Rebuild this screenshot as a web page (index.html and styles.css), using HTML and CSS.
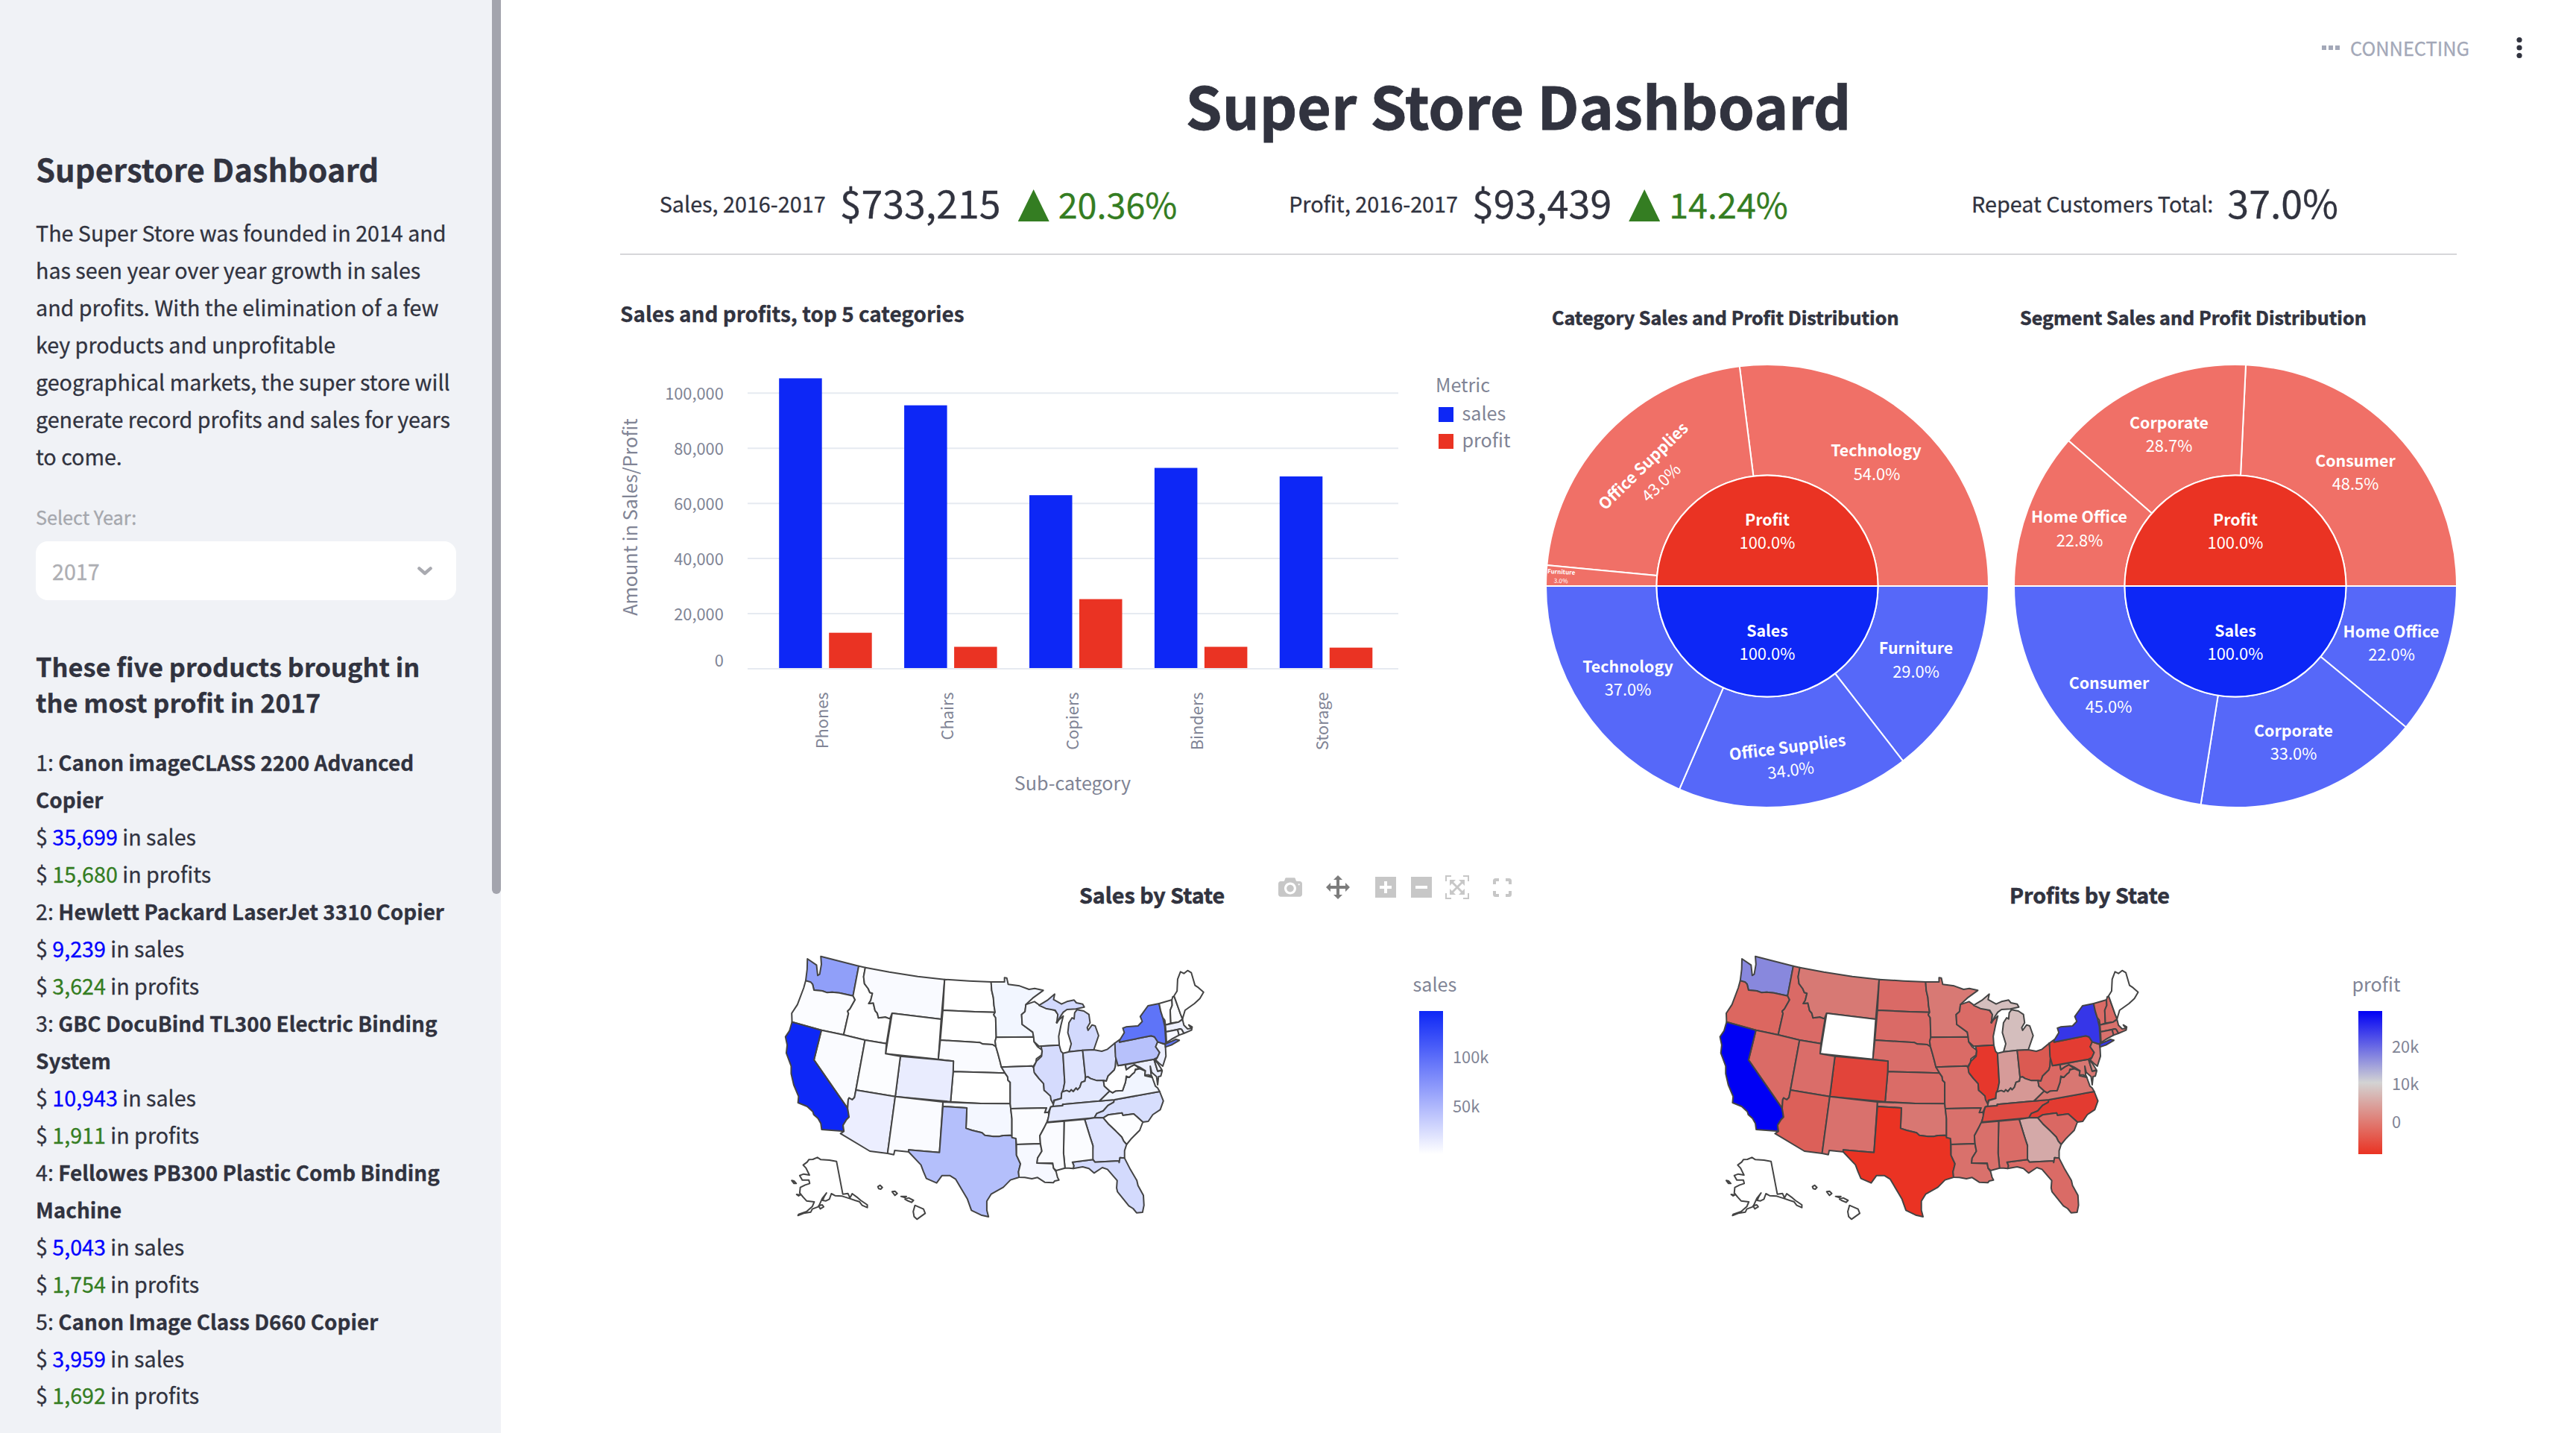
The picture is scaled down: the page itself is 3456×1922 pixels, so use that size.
FILE: index.html
```
<!DOCTYPE html>
<html lang="en">
<head>
<meta charset="utf-8">
<title>Super Store Dashboard</title>
<link rel="stylesheet" href="styles.css">
</head>
<body>
<div class="app">
  <aside class="sidebar">
    <h2 class="sidebar-title">Superstore Dashboard</h2>
    <p class="intro">The Super Store was founded in 2014 and has seen year over year growth in sales and profits. With the elimination of a few key products and unprofitable geographical markets, the super store will generate record profits and sales for years to come.</p>
    <div class="select-label">Select Year:</div>
    <div class="select">
      <span>2017</span>
      <svg class="chevron" viewBox="0 0 20 12"><path d="M2.4 2.4 L10 9 L17.6 2.4"/></svg>
    </div>
    <h3 class="list-title">These five products brought in the most profit in 2017</h3>
    <div class="products">
      <div>1: <b>Canon imageCLASS 2200 Advanced Copier</b></div>
      <div>$ <span class="blue">35,699</span> in sales</div>
      <div>$ <span class="green">15,680</span> in profits</div>
      <div>2: <b>Hewlett Packard LaserJet 3310 Copier</b></div>
      <div>$ <span class="blue">9,239</span> in sales</div>
      <div>$ <span class="green">3,624</span> in profits</div>
      <div>3: <b>GBC DocuBind TL300 Electric Binding System</b></div>
      <div>$ <span class="blue">10,943</span> in sales</div>
      <div>$ <span class="green">1,911</span> in profits</div>
      <div>4: <b>Fellowes PB300 Plastic Comb Binding Machine</b></div>
      <div>$ <span class="blue">5,043</span> in sales</div>
      <div>$ <span class="green">1,754</span> in profits</div>
      <div>5: <b>Canon Image Class D660 Copier</b></div>
      <div>$ <span class="blue">3,959</span> in sales</div>
      <div>$ <span class="green">1,692</span> in profits</div>
    </div>
    <div class="scroll-thumb"></div>
  </aside>

  <main class="main">
    <header class="topbar">
      <svg class="status-dots" viewBox="0 0 24 8"><path d="M0 1h6v6H0zM9 1h6v6H9zM18 1h6v6h-6z"/></svg>
      <span class="status-text">CONNECTING</span>
      <svg class="menu" viewBox="0 0 8 30"><circle cx="4" cy="4.5" r="3.6"/><circle cx="4" cy="15" r="3.6"/><circle cx="4" cy="25.5" r="3.6"/></svg>
    </header>
    <h1 class="title">Super Store Dashboard</h1>
    <section class="kpis">
      <div class="kpi">
        <span class="kpi-label">Sales, 2016-2017</span><span class="kpi-value">$733,215</span><i class="kpi-up"></i><span class="kpi-delta">20.36%</span>
      </div>
      <div class="kpi">
        <span class="kpi-label">Profit, 2016-2017</span><span class="kpi-value">$93,439</span><i class="kpi-up"></i><span class="kpi-delta">14.24%</span>
      </div>
      <div class="kpi kpi-last">
        <span class="kpi-label">Repeat Customers Total:</span><span class="kpi-value">37.0%</span>
      </div>
    </section>
    <section class="charts">
      <div class="panel">
        <h4 class="bar-title">Sales and profits, top 5 categories</h4>
        <svg class="bar-chart" id="bars" viewBox="0 0 1208 660"></svg>
      </div>
      <div class="panel">
        <h4 class="pie-title">Category Sales and Profit Distribution</h4>
        <svg class="pie" id="category" viewBox="-297 -341 594 655"></svg>
      </div>
      <div class="panel">
        <h4 class="pie-title">Segment Sales and Profit Distribution</h4>
        <svg class="pie" id="segment" viewBox="-297 -341 594 655"></svg>
      </div>
    </section>
    <section class="maps">
      <div class="panel">
        <div class="map-head map-head-sales">
          <h4>Sales by State</h4>
          <div class="modebar">
            <svg class="ic camera" viewBox="0 0 1000 1000"><path transform="matrix(1 0 0 -1 0 850)" d="m500 450c-83 0-150-67-150-150 0-83 67-150 150-150 83 0 150 67 150 150 0 83-67 150-150 150z m400 150h-120c-16 0-34 13-39 29l-31 93c-6 15-23 28-40 28h-340c-16 0-34-13-39-28l-31-94c-6-15-23-28-40-28h-120c-55 0-100-45-100-100v-450c0-55 45-100 100-100h800c55 0 100 45 100 100v450c0 55-45 100-100 100z m-400-550c-138 0-250 112-250 250 0 138 112 250 250 250 138 0 250-112 250-250 0-138-112-250-250-250z m365 380c-19 0-35 16-35 35 0 19 16 35 35 35 19 0 35-16 35-35 0-19-16-35-35-35z"/></svg>
            <svg class="ic pan" viewBox="0 0 1000 1000"><path transform="matrix(1 0 0 -1 0 850)" d="m1000 350l-187 188 0-125-250 0 0 250 125 0-188 187-187-187 125 0 0-250-250 0 0 125-188-188 186-187 0 125 252 0 0-250-125 0 187-188 188 188-125 0 0 250 250 0 0-126 187 188z"/></svg>
            <svg class="ic narrow plus" viewBox="0 0 875 1000"><path transform="matrix(1 0 0 -1 0 850)" d="m1 787l0-875 875 0 0 875-875 0z m687-500l-187 0 0-187-125 0 0 187-188 0 0 125 188 0 0 187 125 0 0-187 187 0 0-125z"/></svg>
            <svg class="ic narrow minus" viewBox="0 0 875 1000"><path transform="matrix(1 0 0 -1 0 850)" d="m0 788l0-876 875 0 0 876-875 0z m688-500l-500 0 0 125 500 0 0-125z"/></svg>
            <svg class="ic auto" viewBox="0 0 1000 1000"><path transform="matrix(1 0 0 -1 0 850)" d="m250 850l-187 0-63 0 0-62 0-188 63 0 0 188 187 0 0 62z m688 0l-188 0 0-62 188 0 0-188 62 0 0 188 0 62-62 0z m-875-938l0 188-63 0 0-188 0-62 63 0 187 0 0 62-187 0z m875 188l0-188-188 0 0-62 188 0 62 0 0 62 0 188-62 0z m-125 188l-1 0-93-94-156 156 156 156 92-93 2 0 0 250-250 0 0-2 93-92-156-156-156 156 94 92 0 2-250 0 0-250 0 0 93 93 157-156-157-156-93 94 0 0 0-250 250 0 0 0-94 93 156 157 156-157-93-93 0 0 250 0 0 250z"/></svg>
            <svg class="full" viewBox="0 0 25 25"><path d="M2 8V3.500Q2 2 3.500 2H8M17 2h4.500Q23 2 23 3.500V8M23 17v4.500Q23 23 21.500 23H17M8 23H3.500Q2 23 2 21.500V17"/></svg>
          </div>
        </div>
        <svg class="map" id="sales-map" viewBox="832 1240 1216 430"></svg>
      </div>
      <div class="panel">
        <div class="map-head map-head-profit"><h4>Profits by State</h4></div>
        <svg class="map" id="profit-map" viewBox="2080 1240 1216 430"></svg>
      </div>
    </section>
  </main>
</div>
<script src="charts.js"></script>
</body>
</html>
```
FILE: styles.css
```
* { box-sizing: border-box; }
html, body { margin: 0; height: 100%; }
body {
  background: #fff;
  color: #31333f;
  font-family: "Noto Sans CJK JP", "Noto Sans", sans-serif;
  font-size: 28.67px;
  -webkit-text-stroke: 0.3px currentColor;
  overflow: hidden;
}
h1, h2, h3, h4, p { margin: 0; }
svg { display: block; overflow: visible; }

.app { display: flex; width: 3456px; height: 1922px; }

/* sidebar */
.sidebar {
  position: relative;
  width: 672px;
  flex: none;
  padding: 201px 60px 0 48px;
  background: #f0f2f6;
  line-height: 50px;
}
.sidebar-title { font-size: 41.85px; line-height: 50px; font-weight: 700; }
.intro { margin-top: 36px; }
.select-label { margin-top: 38px; font-size: 25.2px; line-height: 36px; color: #a5a7ad; }
.select {
  display: flex;
  justify-content: space-between;
  align-items: center;
  height: 79px;
  margin-top: 15px;
  padding: 0 32px 0 22px;
  border-radius: 16px;
  background: #fff;
  color: #adaeb3;
}
.chevron { width: 20px; height: 12px; fill: none; stroke: #a9aab0; stroke-width: 4.4; stroke-linecap: round; stroke-linejoin: round; }
.list-title { margin-top: 64px; font-size: 34.4px; line-height: 48px; font-weight: 700; }
.products { margin-top: 32px; line-height: 49.97px; }
.products b { font-weight: 700; font-size: 27.88px; line-height: 30px; }
.blue { color: #0000ff; }
.green { color: #347d22; }
.scroll-thumb {
  position: absolute;
  top: 0;
  right: 0;
  width: 12px;
  height: 1199px;
  border-radius: 0 0 6px 6px;
  background: #a3a4ad;
}

/* header */
.main { flex: 1; padding: 0 160px; }
.topbar {
  display: flex;
  align-items: center;
  justify-content: flex-end;
  height: 92px;
  margin-right: -88px;
  padding-top: 35px;
}
.status-dots { width: 24px; height: 8px; fill: #a3a8b8; }
.status-text { margin: 0 63px 0 14px; font-size: 25.38px; line-height: 40px; color: #a3a8b8; }
.menu { width: 8px; height: 30px; fill: #31333f; }
.title {
  padding-right: 54px;
  text-align: center;
  font-size: 78.63px;
  line-height: 96px;
  font-weight: 700;
  -webkit-text-stroke-width: 0.8px;
}
.kpis {
  display: grid;
  grid-template-columns: repeat(3, 1fr);
  gap: 32px;
  height: 154px;
  padding-top: 51px;
  border-bottom: 2px solid #d6d6d9;
}
.kpi { display: flex; justify-content: center; white-space: nowrap; }
.kpi-last { padding-right: 10px; }
.kpi-label { margin-top: 14px; line-height: 40px; font-size: 28.75px; }
.kpi-value { margin-left: 19px; line-height: 64px; font-size: 51.9px; }
.kpi-up {
  width: 42px;
  height: 43px;
  margin: 15px 12px 0 23px;
  background: #347d22;
  clip-path: polygon(50% 0, 100% 100%, 0 100%);
}
.kpi-delta { margin-top: 2px; line-height: 64px; font-size: 46.7px; color: #347d22; }

/* charts */
.charts { display: grid; grid-template-columns: 1208px 594px 594px; gap: 34px; height: 798px; }
.bar-title { margin-top: 58px; font-size: 27.9px; line-height: 40px; font-weight: 700; }
.bar-chart { width: 1208px; height: 660px; }
.pie-title { margin-top: 63px; padding-left: 8px; font-size: 25.1px; line-height: 40px; font-weight: 700; -webkit-text-stroke-width: 0.6px; }
.pie { width: 594px; height: 655px; }
svg text { font-family: "Noto Sans CJK JP", "Noto Sans", sans-serif; }
.grid { stroke: #e6eaf1; stroke-width: 2; }
.tick { fill: #808495; color: #808495; font-size: 21.8px; }
.axis { fill: #808495; color: #808495; font-size: 25.15px; }
.end { text-anchor: end; }
.mid { text-anchor: middle; }
.sales { fill: #0d27f6; }
.profit { fill: #ea3323; }
.slice { stroke: #fff; stroke-width: 2; }
.sales-light { fill: #5668f9; }
.profit-light { fill: #f07067; }
.pie-name { fill: #fff; color: #fff; font-size: 21.4px; font-weight: 700; text-anchor: middle; -webkit-text-stroke-width: 0.7px; }
.pie-value { fill: #fff; color: #fff; font-size: 21.92px; text-anchor: middle; }

/* maps */
.maps { display: grid; grid-template-columns: 1216px 1216px; gap: 32px; }
.map-head { display: flex; height: 100px; padding-top: 40px; }
.map-head h4 { font-size: 28.65px; line-height: 40px; font-weight: 700; -webkit-text-stroke-width: 0.6px; }
.map-head-sales { padding-left: 616px; }
.map-head-profit { padding-left: 616px; }
.modebar { display: flex; margin: -6px 0 0 72px; fill: #c7c7c7; }
.ic { width: 32px; height: 32px; }
.narrow { width: 28px; }
.pan { margin-left: 32px; fill: #7c7c7c; }
.plus { margin-left: 34px; }
.minus { margin-left: 20px; }
.auto { margin-left: 18px; }
.full { width: 25px; height: 25px; margin: 4px 0 0 32px; fill: none; stroke: #c7c7c7; stroke-width: 4; }
.map { width: 1216px; height: 430px; }
.state { stroke: #444; stroke-width: 2; stroke-linejoin: round; vector-effect: non-scaling-stroke; }
```
FILE: charts.js
```
const NS = 'http://www.w3.org/2000/svg';
function el(parent, tag, attrs, text) {
  const node = document.createElementNS(NS, tag);
  for (const key in attrs) node.setAttribute(key, attrs[key]);
  if (text !== undefined) node.textContent = text;
  parent.appendChild(node);
  return node;
}

// Grouped bar chart
const bars = document.getElementById('bars');
const base = 457;
const perUnit = 73.95 / 20000;
for (let v = 0; v <= 100000; v += 20000) {
  const y = base - v * perUnit;
  el(bars, 'line', { class: 'grid', x1: 171, x2: 1044, y1: y, y2: y });
  el(bars, 'text', { class: 'tick end', x: 138.800, y: v ? y + 9 : y - 3.500 }, v.toLocaleString('en-US'));
}
[['Phones', 105100, 12800], ['Chairs', 95300, 7700], ['Copiers', 62700, 25000], ['Binders', 72600, 7700], ['Storage', 69500, 7400]]
  .forEach(([name, sales, profit], i) => {
    const x = 213.2 + i * 167.9;
    el(bars, 'rect', { class: 'sales', x: x, y: base - 1 - sales * perUnit, width: 57.500, height: sales * perUnit });
    el(bars, 'rect', { class: 'profit', x: x + 67, y: base - 1 - profit * perUnit, width: 57.500, height: profit * perUnit });
    el(bars, 'text', { class: 'tick end', transform: `translate(${x + 65.5} 488.5) rotate(-90)` }, name);
  });
el(bars, 'text', { class: 'axis mid', transform: 'translate(23 253.5) rotate(-90)' }, 'Amount in Sales/Profit');
el(bars, 'text', { class: 'axis mid', x: 607, y: 620 }, 'Sub-category');
el(bars, 'text', { class: 'axis', x: 1094, y: 86 }, 'Metric');
el(bars, 'rect', { class: 'sales', x: 1098, y: 106, width: 20, height: 20 });
el(bars, 'rect', { class: 'profit', x: 1098, y: 142, width: 20, height: 20 });
el(bars, 'text', { class: 'axis', x: 1129.500, y: 123.500 }, 'sales');
el(bars, 'text', { class: 'axis', x: 1129.500, y: 159.500 }, 'profit');

// Sunburst charts: inner half discs plus an outer ring, angles run from 3 o'clock
function ring(svg, r0, r1, a0, a1, cls) {
  const p = (r, a) => `${r * Math.cos(a * Math.PI / 180)} ${-r * Math.sin(a * Math.PI / 180)}`;
  const sweep = a1 > a0 ? 0 : 1;
  el(svg, 'path', { class: 'slice ' + cls, d: `M${p(r0, a0)}L${p(r1, a0)}A${r1} ${r1} 0 0 ${sweep} ${p(r1, a1)}L${p(r0, a1)}A${r0 || 1} ${r0 || 1} 0 0 ${1 - sweep} ${p(r0, a0)}Z` });
}
function sunburst(id, profits, sales, labels) {
  const svg = document.getElementById(id);
  const draw = (cuts, sign, cls) => {
    let a = 0;
    cuts.forEach(c => { const b = a + c * 1.8; ring(svg, 148.500, 297, sign * a, sign * b, cls); a = b; });
  };
  draw(profits, 1, 'profit-light');
  draw(sales, -1, 'sales-light');
  ring(svg, 0, 148.500, 0, 180, 'profit');
  ring(svg, 0, 148.500, 0, -180, 'sales');
  labels.concat([['Profit', 0, -81.500, '100.0%', 0, -50], ['Sales', 0, 67.500, '100.0%', 0, 99]])
    .forEach(([name, x, y, value, vx, vy, rot = 0, scale = 1]) => {
      el(svg, 'text', { class: 'pie-name', transform: `translate(${x} ${y}) rotate(${rot}) scale(${scale})` }, name);
      el(svg, 'text', { class: 'pie-value', transform: `translate(${vx} ${vy}) rotate(${rot}) scale(${scale})` }, value);
    });
}
sunburst('category', [54, 43, 3], [29, 34, 37], [
  ['Technology', 146, -174.500, '54.0%', 147, -142],
  ['Office Supplies', -161, -155.500, '43.0%', -137, -133, -44.1],
  ['Furniture', -276.500, -16, '3.0%', -277, -4, 2.7, 0.375],
  ['Technology', -187, 115.500, '37.0%', -187, 147],
  ['Office Supplies', 28, 224, '34.0%', 32.500, 255, -7.2],
  ['Furniture', 199.500, 90.500, '29.0%', 199.500, 123]
]);
sunburst('segment', [48.500, 28.700, 22.800], [22, 33, 45], [
  ['Consumer', 161, -160.500, '48.5%', 161, -129],
  ['Corporate', -89, -211.500, '28.7%', -89, -180],
  ['Home Office', -209.500, -85.500, '22.8%', -209, -53.500],
  ['Home Office', 209, 69, '22.0%', 209.500, 100],
  ['Corporate', 78, 202, '33.0%', 78, 233],
  ['Consumer', -169.500, 138, '45.0%', -170, 169.500]
]);

// State outlines with their colours on the sales and the profit scale
const STATES = [
  ['AK', '#fff', '#fff', 'M98 908L112 896 118 886 132 885 148 877 160 886 190 888 215 893 237 1025 255 1022 262 1040 270 1023 290 1040 300 1050 323 1068 323 1079 305 1070 295 1055 280 1050 262 1043 235 1033 210 1031 197 1023 190 1045 178 1052 166 1050 172 1035 180 1020 165 1042 158 1060 152 1075 130 1085 125 1097 100 1102 80 1111 82 1106 110 1095 130 1075 137 1056 110 1052 98 1037 86 1020 88 998 105 988 121 982 118 968 95 968 86 950 100 944 120 948 108 920ZM58 970L66 972 74 982 66 982ZM75 1026L88 1028 82 1032ZM152 1072L165 1068 170 1076 158 1084Z'],
  ['HI', '#fff', '#fff', 'M360 995L368 989 376 998 370 1005 363 1003ZM410 1015L420 1013 428 1022 420 1030ZM441 1034L460 1034 455 1039ZM455 1045L468 1040 485 1050 478 1058 462 1050ZM490 1070L520 1085 526 1102 497 1126 487 1115 484 1095Z'],
  ['WA', '#909ff9', '#8888dd', 'M113 78L145 103 149 145 156 140 162 100 160 68 293 107 273 227 225 215 200 212 182 214 165 207 136 204 131 180 107 166 112 120Z'],
  ['OR', '#fbfcff', '#dc6760', 'M107 166L125 172 131 180 136 204 165 207 182 214 200 212 225 215 273 227 280 243 262 280 254 289 257 298 240 384 162 365 59 332 58 297 78 262 100 195Z'],
  ['ID', '#fefeff', '#da6a66', 'M293 107L316 113 310 150 313 178 326 198 332 214 341 217 335 245 328 258 344 256 350 286 358 297 362 316 386 312 402 319 406 308 390 419 315 405 240 384 257 298 254 289 262 280 280 243 273 227Z'],
  ['MT', '#f9faff', '#d77974', 'M316 113L400 131 500 149 594 161 582 321 410 297 406 308 402 319 386 312 362 316 358 297 350 286 344 256 328 258 335 245 341 217 332 214 326 198 313 178 310 150Z'],
  ['WY', '#fff', '#fff', 'M410 297L582 321 572 482 387 460Z'],
  ['ND', '#fff', '#da6a66', 'M594 161L680 167 757 171 759 205 765 235 767 265 771 293 700 291 588 285Z'],
  ['SD', '#fff', '#da6a66', 'M588 285L700 291 771 293 766 303 773 315 775 394 771 410 774 432 762 423 728 421 718 415 579 405Z'],
  ['NE', '#fafbff', '#d96d69', 'M579 405L718 415 728 421 762 423 774 432 781 460 788 490 793 512 806 538 720 535 624 532 625 490 572 482Z'],
  ['KS', '#fff', '#da6c67', 'M624 532L720 535 806 538 815 553 816 566 824 575 824 661 720 660 615 653Z'],
  ['CO', '#e9ecfe', '#e2443a', 'M439 470L572 484 625 490 624 532 615 653 421 632Z'],
  ['NV', '#fafbff', '#da6b66', 'M162 365L240 384 315 405 278 636 270 645 259 638 256 645 254 680 136 485Z'],
  ['UT', '#fcfdff', '#da6d69', 'M315 405L390 419 387 460 439 470 421 632 283 606Z'],
  ['CA', '#0d27f6', '#0000f5', 'M59 332L162 365 136 485 254 680 259 715 250 725 238 748 241 772 163 765 160 740 150 720 135 705 132 693 112 672 80 657 82 632 65 585 56 540 56 510 39 457 42 425 36 392 50 368Z'],
  ['AZ', '#eceeff', '#dc6059', 'M283 606L421 632 394 861 332 852 229 781 241 772 238 748 250 725 259 715 254 680 256 645 259 638 270 645 278 636Z'],
  ['NM', '#fafbff', '#d9716d', 'M421 632L588 654 576 857 468 847 470 855 419 849 416 866 394 861Z'],
  ['OK', '#f4f7ff', '#d87772', 'M588 654L720 660 824 661 826 681 830 722 830 797 825 788 800 789 785 793 765 793 735 788 725 778 690 768 669 760 672 678 588 672Z'],
  ['TX', '#b4bffb', '#ea3323', 'M588 672L672 678 669 760 690 768 725 778 735 788 765 793 785 793 800 789 825 788 844 801 846 868 860 903 853 935 855 957 825 968 800 997 757 1025 742 1053 742 1090 748 1116 722 1109 688 1090 674 1045 655 1008 633 965 612 950 585 950 566 980 530 962 520 935 511 907 468 855 468 847 576 857Z'],
  ['MN', '#f2f6ff', '#d87974', 'M757 171L804 171 804 154 812 155 817 181 857 187 890 201 910 197 940 205 903 236 879 262 876 290 864 302 866 342 903 373 906 392 775 394 773 315 766 303 771 293 767 265 765 235 759 205Z'],
  ['IA', '#fff', '#da6b66', 'M775 394L906 392 908 412 920 432 936 445 934 465 916 480 914 495 904 512 900 509 793 514 788 490 781 460 774 432 771 410Z'],
  ['MO', '#eff2ff', '#d9716c', 'M793 514L900 509 906 515 911 540 925 560 941 580 943 607 966 625 968 645 979 655 975 670 966 674 958 695 945 697 951 678 826 681 824 661 824 575 816 566 815 553 806 538Z'],
  ['AR', '#fbfcff', '#d9716c', 'M826 681L951 678 945 697 958 695 960 712 952 737 942 760 928 790 930 822 846 825 844 801 830 797 830 722Z'],
  ['LA', '#f6f8ff', '#d9716c', 'M846 825L930 822 935 852 920 880 918 900 973 902 976 920 985 935 990 958 995 968 980 972 975 979 945 977 920 958 900 963 875 958 855 957 853 935 860 903 846 868Z'],
  ['WI', '#f4f7ff', '#da6b66', 'M879 262L909 250 930 267 980 285 991 300 989 325 986 335 998 320 1010 308 1002 345 994 390 996 425 925 430 908 412 906 392 903 373 866 342 864 302 876 290Z'],
  ['MI', '#d2d9fd', '#d4bebd', 'M925 265L954 245 980 220 976 242 1004 260 1023 250 1048 244 1056 255 1078 260 1084 272 1054 280 1023 282 1010 293 1000 310 988 336 991 302 982 285 949 278ZM1058 283L1082 288 1100 302 1104 335 1094 355 1097 366 1111 344 1122 348 1134 387 1117 444 1078 446 1030 452 1038 420 1026 375 1030 335 1041 315 1048 320 1050 295Z'],
  ['IL', '#d5dbfd', '#e6372c', 'M932 430L996 425 1002 450 1009 458 1015 575 1010 605 1004 620 1003 640 977 647 976 665 967 645 965 630 943 607 941 580 925 560 908 535 906 515 916 490 934 470 936 450Z'],
  ['IN', '#e0e5fe', '#d69b99', 'M1009 458L1030 452 1078 446 1088 555 1086 570 1074 575 1068 595 1060 605 1055 598 1045 612 1038 605 1032 613 1022 608 1006 614 1010 605 1015 575Z'],
  ['OH', '#d7ddfd', '#db5a52', 'M1078 446L1117 444 1145 450 1165 442 1191 417 1195 470 1193 510 1189 525 1167 550 1161 570 1151 568 1128 568 1106 560 1097 553 1088 555Z'],
  ['KY', '#e3e8fe', '#d69895', 'M1088 555L1097 553 1106 560 1128 568 1151 568 1154 590 1173 610 1137 650 1008 664 1008 669 974 672 976 660 979 648 1003 640 1004 620 1006 614 1022 608 1032 613 1038 605 1045 612 1055 598 1060 605 1068 595 1074 575 1086 570Z'],
  ['TN', '#e3e8fe', '#df4a42', 'M974 672L1008 669 1008 664 1137 650 1189 645 1187 655 1167 668 1150 690 1128 700 1119 718 954 735 958 715 962 690 966 674Z'],
  ['NC', '#d7defd', '#e33b31', 'M1189 645L1348 612 1361 650 1350 685 1324 705 1308 732 1289 735 1257 702 1219 708 1216 698 1167 706 1150 718 1119 718 1128 700 1150 690 1167 668 1187 655Z'],
  ['SC', '#fcfdff', '#da6863', 'M1150 718L1167 706 1216 698 1219 708 1257 702 1289 735 1278 768 1250 800 1232 825 1222 812 1215 795 1195 772 1170 745Z'],
  ['GA', '#dee3fe', '#d4a9a8', 'M1085 724L1119 718 1150 718 1170 745 1195 772 1215 795 1222 812 1232 825 1225 850 1225 880 1209 878 1206 898 1205 891 1121 896 1112 882 1114 830 1104 795Z'],
  ['FL', '#d3dafd', '#da6b66', 'M1042 896L1114 886 1121 896 1205 891 1206 898 1209 878 1225 880 1245 925 1268 970 1272 990 1291 1030 1293 1070 1288 1098 1267 1100 1255 1083 1240 1072 1200 1015 1197 1000 1199 970 1165 925 1147 918 1118 940 1100 922 1078 915 1045 922 1047 910Z'],
  ['AL', '#fbfcff', '#da6c67', 'M1013 731L1085 724 1104 795 1114 830 1114 886 1042 896 1047 910 1045 922 1030 920 1016 920 1011 860Z'],
  ['MS', '#fafbff', '#d9706b', 'M952 737L1013 731 1011 860 1016 920 985 930 976 920 973 900 918 900 920 880 935 852 930 822 928 790 942 760Z'],
  ['VA', '#f1f5ff', '#d87772', 'M1278 520L1298 530 1296 548 1322 555 1333 590 1341 598 1348 612 1189 645 1137 650 1173 610 1183 617 1193 610 1218 608 1228 575 1231 555 1241 555 1252 542 1263 525Z'],
  ['WV', '#fefeff', '#da6863', 'M1191 417L1202 508 1228 504 1231 524 1246 512 1259 504 1278 520 1263 522 1260 535 1252 542 1241 555 1231 550 1228 575 1218 608 1193 610 1183 617 1173 610 1154 590 1151 568 1161 570 1167 550 1189 525 1193 510 1195 470Z'],
  ['MD', '#ebeefe', '#d87772', 'M1228 504L1328 482 1341 530 1357 528 1352 550 1344 552 1341 585 1337 552 1320 535 1315 510 1318 545 1322 555 1310 545 1296 545 1298 528 1278 514 1259 504 1246 512 1231 524Z'],
  ['DE', '#f2f5ff', '#d6918e', 'M1328 482L1341 498 1356 525 1341 530Z'],
  ['PA', '#b7c1fb', '#e33c32', 'M1191 417L1208 403 1207 413 1318 388 1330 392 1341 412 1334 432 1348 455 1340 475 1328 482 1202 508 1193 472Z'],
  ['NJ', '#eceffe', '#d87c78', 'M1341 412L1368 423 1370 470 1359 510 1346 498 1334 485 1340 475 1348 455 1334 432Z'],
  ['NY', '#5e74f8', '#3636e8', 'M1208 405L1224 375 1219 357 1230 352 1272 348 1287 330 1280 310 1307 267 1346 258 1352 290 1359 315 1366 350 1370 418 1363 420 1341 412 1330 392 1318 388 1207 413ZM1368 420L1394 408 1405 402 1417 406 1389 425 1368 433Z'],
  ['VT', '#fdfdff', '#da6b66', 'M1346 258L1391 243 1392 265 1385 285 1387 337 1368 344 1366 325 1359 315 1352 290Z'],
  ['NH', '#fbfcff', '#da6b66', 'M1391 243L1394 230 1400 232 1421 300 1428 320 1415 332 1387 337 1385 285 1392 265Z'],
  ['ME', '#fff', '#fff', 'M1398 228L1409 208 1411 160 1421 130 1433 137 1446 125 1459 134 1472 185 1484 194 1502 212 1489 238 1470 258 1437 285 1428 320 1421 300 1400 232Z'],
  ['MA', '#edf0ff', '#d9716c', 'M1368 344L1415 332 1428 322 1433 345 1446 360 1459 358 1450 344 1462 352 1460 365 1433 378 1425 362 1420 360 1370 372Z'],
  ['CT', '#f7f8ff', '#d9716c', 'M1370 372L1411 363 1416 385 1389 402 1372 415Z'],
  ['RI', '#fafbff', '#da6b66', 'M1411 363L1420 360 1425 362 1433 378 1416 385Z']
];
function map(id, x, colour, name, nameX, barX, stops, ticks) {
  const svg = document.getElementById(id);
  const inner = el(svg, 'svg', { x: x, y: 1260, width: 600, height: 400, viewBox: '0 0 1568 1200', preserveAspectRatio: 'none' });
  STATES.forEach(s => el(inner, 'path', { class: 'state', fill: s[colour], d: s[3] }));
  const grad = el(svg, 'linearGradient', { id: id + '-scale', x1: 0, y1: 0, x2: 0, y2: 1 });
  stops.forEach((c, i) => el(grad, 'stop', { offset: i / (stops.length - 1), 'stop-color': c }));
  el(svg, 'rect', { x: barX, y: 1356, width: 32, height: 192, fill: `url(#${id}-scale)` });
  el(svg, 'text', { class: 'axis', x: nameX, y: 1330 }, name);
  ticks.forEach(([t, y]) => el(svg, 'text', { class: 'tick', x: barX + 45, y: y }, t));
}
map('sales-map', 1040, 1, 'sales', 1895.500, 1904, ['#0d27f6', '#fff'], [['100k', 1426], ['50k', 1491.700]]);
map('profit-map', 2293.800, 2, 'profit', 3155.500, 3164, ['#0000f5', '#d3d3d3', '#ea3323'], [['20k', 1411.700], ['10k', 1461.700], ['0', 1512.700]]);
```
